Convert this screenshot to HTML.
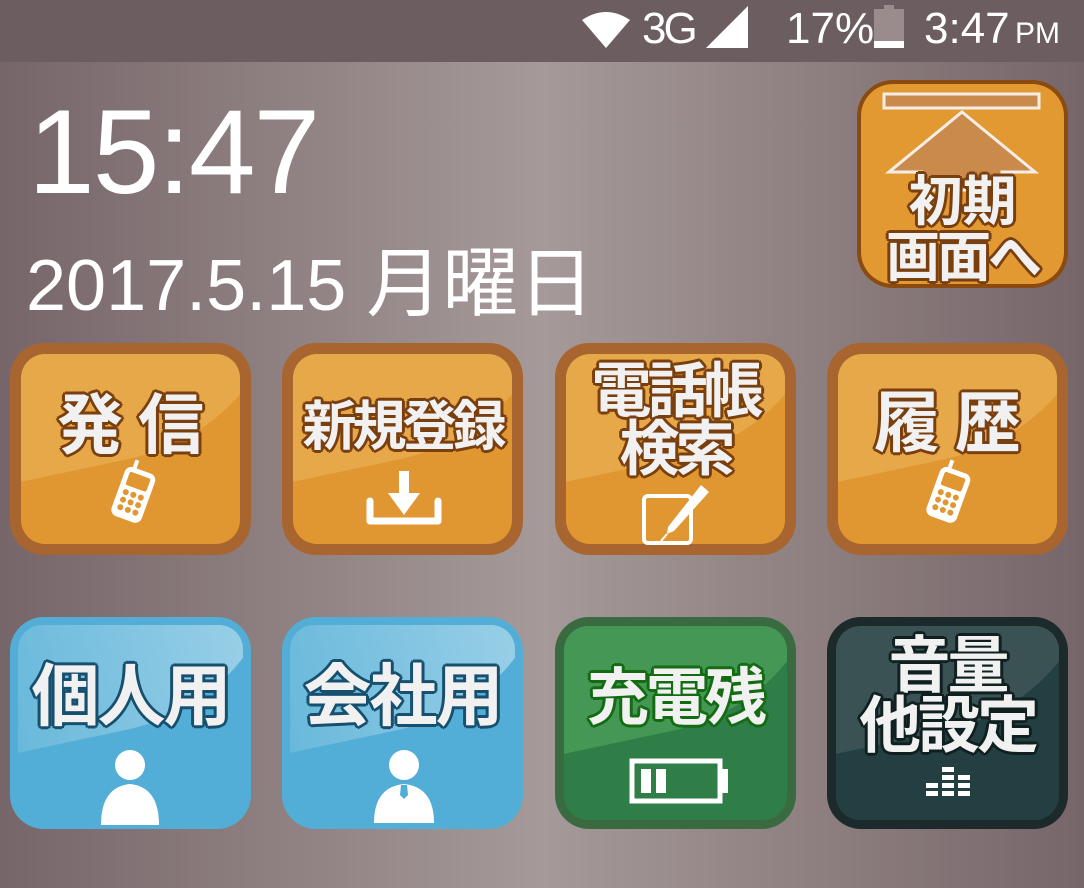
<!DOCTYPE html>
<html><head><meta charset="utf-8">
<style>
*{margin:0;padding:0;box-sizing:border-box}
body{width:1084px;height:888px;overflow:hidden;position:relative;
background:linear-gradient(90deg,#76666a 0%,#8e7f80 25%,#a59a99 50%,#8e7f80 75%,#76666a 100%);
font-family:"Liberation Sans","Noto Sans CJK JP",sans-serif;color:#fff}
.sb{position:absolute;left:0;top:0;width:1084px;height:62px;background:#6c5d61}
.abs{position:absolute}
.tile{position:absolute;width:241px;height:212px;border-radius:34px}
.in{position:absolute;left:11px;top:11px;right:11px;bottom:11px;border-radius:24px;overflow:hidden}
.gl{position:absolute;left:-10px;top:-120px;width:300px;height:250px;border-radius:0 0 60% 0;transform:rotate(-12deg);transform-origin:0 100%}
.lab{position:absolute;left:-10px;right:-10px;text-align:center;font-family:"Noto Sans CJK JP","WenQuanYi Zen Hei",sans-serif;font-weight:700;color:#f1f1f1;line-height:1;white-space:nowrap}
.o{text-shadow:3px 0 0 #7a3f0e,-3px 0 0 #7a3f0e,0 3px 0 #7a3f0e,0 -3px 0 #7a3f0e,2px 2px 0 #7a3f0e,-2px 2px 0 #7a3f0e,2px -2px 0 #7a3f0e,-2px -2px 0 #7a3f0e}
.b{text-shadow:3px 0 0 #16506e,-3px 0 0 #16506e,0 3px 0 #16506e,0 -3px 0 #16506e,2px 2px 0 #16506e,-2px 2px 0 #16506e,2px -2px 0 #16506e,-2px -2px 0 #16506e}
.g{text-shadow:3px 0 0 #136b12,-3px 0 0 #136b12,0 3px 0 #136b12,0 -3px 0 #136b12,2px 2px 0 #136b12,-2px 2px 0 #136b12,2px -2px 0 #136b12,-2px -2px 0 #136b12}
.d{text-shadow:3px 0 0 #102020,-3px 0 0 #102020,0 3px 0 #102020,0 -3px 0 #102020,2px 2px 0 #102020,-2px 2px 0 #102020,2px -2px 0 #102020,-2px -2px 0 #102020}
.or{background:#a8652f}.or .in{background:#e09631}.or .gl{background:rgba(255,230,160,.22)}
.bl{background:#52aed6}.bl .in{background:#52aed6}.bl .gl{background:linear-gradient(90deg,rgba(255,255,255,.12),rgba(255,255,255,.45))}
.gr{background:#3a6b40}.gr .in{background:#2f7d47}.gr .gl{background:rgba(110,200,110,.35)}
.dk{background:#1c2a2b}.dk .in{background:#243f41}.dk .gl{background:rgba(255,255,255,.1)}
</style></head><body>
<div class="sb">
 <svg class="abs" style="left:580px;top:10px" width="52" height="38" viewBox="0 0 52 38"><path d="M2 10 Q26 -6 50 10 L26 38 Z" fill="#fff"/></svg>
 <div class="abs" style="left:642px;top:4px;font-size:44px;letter-spacing:-3px">3G</div>
 <svg class="abs" style="left:706px;top:6px" width="42" height="42"><path d="M0 42 L42 0 L42 42 Z" fill="#fff"/></svg>
 <div class="abs" style="left:786px;top:4px;font-size:44px">17%</div>
 <div class="abs" style="left:874px;top:9px;width:30px;height:38px;background:#9a8c8c"></div>
 <div class="abs" style="left:884px;top:5px;width:10px;height:5px;background:#9a8c8c"></div>
 <div class="abs" style="left:874px;top:41px;width:30px;height:7px;background:#fff"></div>
 <div class="abs" style="left:924px;top:4px;font-size:44px">3:47</div>
 <div class="abs" style="left:1015px;top:17px;font-size:30px">PM</div>
</div>

<div class="abs" style="left:28px;top:86px;font-size:120px;line-height:1.1;letter-spacing:-2px">15:47</div>
<div class="abs" style="left:26px;top:236px;font-size:72px;line-height:1.1">2017.5.15 <span style="font-family:'Noto Sans CJK JP',sans-serif;font-weight:400;font-size:76px">月曜日</span></div>

<!-- home button -->
<div class="tile or" style="left:857px;top:80px;width:211px;height:208px;background:#8a4a10;border-radius:36px">
 <div class="in" style="left:4px;top:4px;right:4px;bottom:4px;border-radius:32px;background:#e39932"></div>
 <svg class="abs" style="left:0;top:0" width="211" height="208"><rect x="27" y="14" width="155" height="14" fill="#c98a4c" stroke="#f6eee6" stroke-width="3"/><path d="M105 32 L178 92 L145 92 L145 110 L65 110 L65 92 L32 92 Z" fill="#c98a4c" stroke="#f6eee6" stroke-width="3"/></svg>
 <div class="lab o" style="top:90px;font-size:54px">初期</div>
 <div class="lab o" style="top:146px;font-size:54px;letter-spacing:-3px">画面へ</div>
</div>

<!-- row 1 -->
<div class="tile or" style="left:10px;top:343px"><div class="in"><div class="gl"></div></div>
 <div class="lab o" style="top:44px;font-size:66px">発 信</div>
 <svg class="abs" style="left:94px;top:112px" width="60" height="70" viewBox="0 0 60 70"><g transform="rotate(20 30 38)"><line x1="22" y1="6" x2="22" y2="16" stroke="#fff" stroke-width="4"/><rect x="14" y="14" width="32" height="52" rx="7" fill="#fff"/><rect x="19" y="19" width="22" height="14" rx="2" fill="#e09631"/><g fill="#e09631"><circle cx="22" cy="40" r="3"/><circle cx="30" cy="40" r="3"/><circle cx="38" cy="40" r="3"/><circle cx="22" cy="48" r="3"/><circle cx="30" cy="48" r="3"/><circle cx="38" cy="48" r="3"/><circle cx="22" cy="56" r="3"/><circle cx="30" cy="56" r="3"/><circle cx="38" cy="56" r="3"/></g></g></svg>
</div>
<div class="tile or" style="left:282px;top:343px"><div class="in"><div class="gl"></div></div>
 <div class="lab o" style="top:52px;font-size:54px;letter-spacing:-4px">新規登録</div>
 <svg class="abs" style="left:82px;top:126px" width="80" height="70"><rect x="35" y="2" width="10" height="24" fill="#fff"/><path d="M24 24 L56 24 L40 46 Z" fill="#fff"/><path d="M6 32 L6 52 L74 52 L74 32" fill="none" stroke="#fff" stroke-width="7" stroke-linejoin="round" stroke-linecap="round"/></svg>
</div>
<div class="tile or" style="left:555px;top:343px"><div class="in"><div class="gl"></div></div>
 <div class="lab o" style="top:14px;font-size:60px;letter-spacing:-4px">電話帳</div>
 <div class="lab o" style="top:72px;font-size:60px;letter-spacing:-4px">検索</div>
 <svg class="abs" style="left:84px;top:136px" width="96" height="70"><rect x="5" y="17" width="47" height="47" rx="4" fill="none" stroke="#fff" stroke-width="4"/><path d="M62 6 L70 13 L35 52 L28 55 L29 48 Z" fill="#fff"/><path d="M28 55 L22 62" stroke="#fff" stroke-width="2"/></svg>
</div>
<div class="tile or" style="left:827px;top:343px"><div class="in"><div class="gl"></div></div>
 <div class="lab o" style="top:42px;font-size:66px">履 歴</div>
 <svg class="abs" style="left:92px;top:112px" width="60" height="70" viewBox="0 0 60 70"><g transform="rotate(20 30 38)"><line x1="22" y1="6" x2="22" y2="16" stroke="#fff" stroke-width="4"/><rect x="14" y="14" width="32" height="52" rx="7" fill="#fff"/><rect x="19" y="19" width="22" height="14" rx="2" fill="#e09631"/><g fill="#e09631"><circle cx="22" cy="40" r="3"/><circle cx="30" cy="40" r="3"/><circle cx="38" cy="40" r="3"/><circle cx="22" cy="48" r="3"/><circle cx="30" cy="48" r="3"/><circle cx="38" cy="48" r="3"/><circle cx="22" cy="56" r="3"/><circle cx="30" cy="56" r="3"/><circle cx="38" cy="56" r="3"/></g></g></svg>
</div>

<!-- row 2 -->
<div class="tile bl" style="left:10px;top:617px"><div class="in" style="left:8px;top:8px;right:8px;bottom:8px"><div class="gl"></div></div>
 <div class="lab b" style="top:40px;font-size:68px;letter-spacing:-2px">個人用</div>
 <svg class="abs" style="left:80px;top:132px" width="80" height="80"><circle cx="40" cy="16" r="15" fill="#fff"/><path d="M11 76 Q11 38 40 35 Q69 38 69 76 Z" fill="#fff"/></svg>
</div>
<div class="tile bl" style="left:282px;top:617px"><div class="in" style="left:8px;top:8px;right:8px;bottom:8px"><div class="gl"></div></div>
 <div class="lab b" style="top:40px;font-size:68px;letter-spacing:-2px">会社用</div>
 <svg class="abs" style="left:82px;top:132px" width="80" height="80"><circle cx="40" cy="16" r="15" fill="#fff"/><path d="M10 74 Q10 38 40 35 Q70 38 70 74 Z" fill="#fff"/><path d="M37 36 L43 36 L44 46 L40 50 L36 46 Z" fill="#52aed6"/></svg>
</div>
<div class="tile gr" style="left:555px;top:617px"><div class="in" style="left:9px;top:9px;right:9px;bottom:9px"><div class="gl"></div></div>
 <div class="lab g" style="top:44px;font-size:62px;letter-spacing:-3px">充電残</div>
 <svg class="abs" style="left:74px;top:138px" width="110" height="56"><rect x="3" y="6" width="88" height="40" fill="none" stroke="#fff" stroke-width="5"/><rect x="91" y="14" width="8" height="24" fill="#fff"/><rect x="12" y="14" width="10" height="24" fill="#fff"/><rect x="27" y="14" width="10" height="24" fill="#fff"/></svg>
</div>
<div class="tile dk" style="left:827px;top:617px"><div class="in" style="left:9px;top:9px;right:9px;bottom:9px"><div class="gl"></div></div>
 <div class="lab d" style="top:12px;font-size:62px;letter-spacing:-3px">音量</div>
 <div class="lab d" style="top:72px;font-size:62px;letter-spacing:-3px">他設定</div>
 <svg class="abs" style="left:88px;top:150px" width="66" height="36"><g fill="#fff"><rect x="27" y="0" width="12" height="5"/><rect x="27" y="8" width="12" height="5"/><rect x="27" y="16" width="12" height="5"/><rect x="27" y="24" width="12" height="5"/><rect x="43" y="8" width="12" height="5"/><rect x="43" y="16" width="12" height="5"/><rect x="43" y="24" width="12" height="5"/><rect x="11" y="16" width="12" height="5"/><rect x="11" y="24" width="12" height="5"/></g></svg>
</div>
</body></html>
